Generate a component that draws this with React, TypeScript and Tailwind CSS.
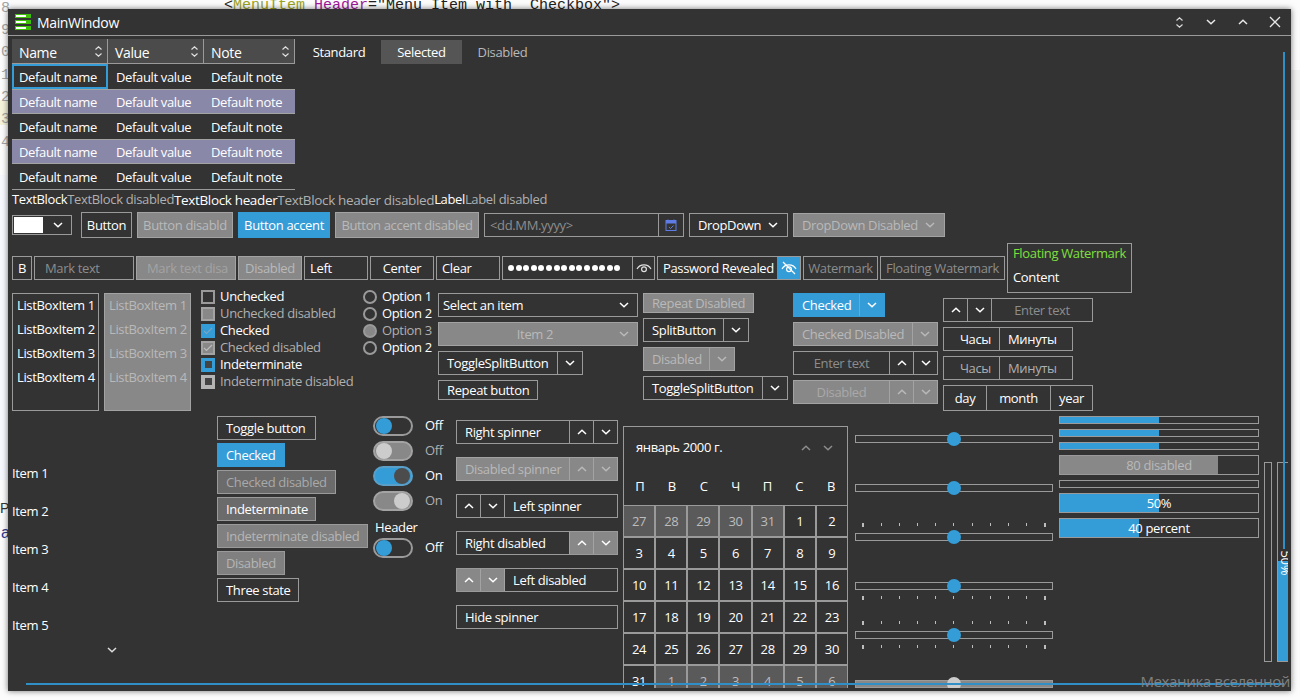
// Control gallery window shown over an IDE. Everything is flow layout; only the
// IDE behind the window and the two stray scrollbar lines are positioned.
import type { ReactNode } from 'react';

const ACCENT = 'bg-[#349dd8]';
const BOX = 'flex shrink-0 items-center border border-[#9a9a9a]';
const DISABLED = 'bg-[#888888] text-[#b9b9b9] border-[#a3a3a3]';

/** Open Sans sits a pixel higher than the original's face; the top padding evens that out in centred rows. */
function T({ children }: { children: ReactNode }) {
  return <span className="whitespace-nowrap pt-[2px]">{children}</span>;
}

function Chevron({ up = false, className = '' }: { up?: boolean; className?: string }) {
  return (
    <svg width="10" height="6" viewBox="0 0 10 6" className={className}>
      <polyline points={up ? '1,5 5,1.2 9,5' : '1,1 5,4.8 9,1'} fill="none" stroke="currentColor" strokeWidth="1.5" />
    </svg>
  );
}

function Sort({ className = '' }: { className?: string }) {
  return (
    <span className={`flex flex-col items-center gap-[3px] ${className}`}>
      <svg width="7" height="4" viewBox="0 0 7 4"><polyline points="0.5,3.5 3.5,0.8 6.5,3.5" fill="none" stroke="currentColor" strokeWidth="1.2" /></svg>
      <svg width="7" height="4" viewBox="0 0 7 4"><polyline points="0.5,0.5 3.5,3.2 6.5,0.5" fill="none" stroke="currentColor" strokeWidth="1.2" /></svg>
    </span>
  );
}

function Logo() {
  return (
    <span className="flex w-4 flex-col gap-[2px]">
      {[0, 1, 2].map((i) => (
        <span key={i} className="flex h-1 items-center bg-[#3fbf0a] pl-[1px]">
          <span className="h-[2px] w-[10px] bg-white" />
        </span>
      ))}
    </span>
  );
}

function TitleBar() {
  return (
    <div className="flex h-[27px] shrink-0 items-center border-b border-[#9a9a9a] pl-[7px] text-[#e8e8e8]">
      <Logo />
      <span className="ml-[6px] text-[14px] text-white">MainWindow</span>
      <span className="ml-auto flex items-center pr-[10px]">
        <Sort className="w-[10px] text-[#dddddd]" />
        <Chevron className="ml-[22px]" />
        <Chevron up className="ml-[22px]" />
        <svg width="12" height="12" viewBox="0 0 12 12" className="ml-[21px]">
          <path d="M1 1 L11 11 M11 1 L1 11" stroke="currentColor" strokeWidth="1.3" />
        </svg>
      </span>
    </div>
  );
}

function HeaderCell({ label, width }: { label: string; width: string }) {
  return (
    <div className={`flex h-[25px] items-center justify-between border-b border-r border-[#9a9a9a] bg-[#4b4b4b] pl-[7px] pr-[5px] text-[14px] ${width}`}>
      <T>{label}</T>
      <Sort className="text-[#e0e0e0]" />
    </div>
  );
}

function DataRow({ tinted, focused }: { tinted: boolean; focused: boolean }) {
  return (
    <div className={`flex h-[25px] items-center ${tinted ? 'border-y border-[#a3a3a3] bg-[#8a88a8]' : ''}`}>
      <div className={`flex h-[25px] w-[96px] items-center ${focused ? 'border-2 border-[#349dd8] pl-[5px]' : 'pl-[7px]'}`}><T>Default name</T></div>
      <div className="flex w-[96px] items-center pl-[8px]"><T>Default value</T></div>
      <div className="flex w-[91px] items-center pl-[7px]"><T>Default note</T></div>
    </div>
  );
}

function DataTable() {
  return (
    <div className="w-[283px] border-b border-[#9a9a9a]">
      <div className="flex">
        <HeaderCell label="Name" width="w-[96px]" />
        <HeaderCell label="Value" width="w-[96px]" />
        <HeaderCell label="Note" width="w-[91px]" />
      </div>
      {[0, 1, 2, 3, 4].map((i) => (
        <DataRow key={i} tinted={i % 2 === 1} focused={i === 0} />
      ))}
    </div>
  );
}

function Tabs() {
  return (
    <div className="ml-[2px] mt-[1px] flex h-[24px] items-center text-center">
      <div className="flex w-[84px] items-center justify-center"><T>Standard</T></div>
      <div className="flex h-[24px] w-[81px] items-center justify-center bg-[#555555]"><T>Selected</T></div>
      <div className="flex w-[81px] items-center justify-center text-[#b9b9b9]"><T>Disabled</T></div>
    </div>
  );
}

function TextRow() {
  return (
    <div className="flex h-[18px] items-center whitespace-nowrap pl-[4px] pt-[2px]">
      <span>TextBlock</span>
      <span className="text-[#b0b0b0]">TextBlock disabled</span>
      <span className="text-[13.5px]">TextBlock header</span>
      <span className="text-[13.5px] text-[#b0b0b0]">TextBlock header disabled</span>
      <span>Label</span>
      <span className="text-[#b0b0b0]">Label disabled</span>
    </div>
  );
}

function CalendarIcon() {
  return (
    <svg width="12" height="12" viewBox="0 0 12 12" className="text-[#5f7ce6]">
      <rect x="1" y="1.5" width="10" height="10" fill="none" stroke="currentColor" />
      <rect x="1" y="1.5" width="10" height="3" fill="currentColor" />
      <path d="M3 0.5 V2 M9 0.5 V2" stroke="currentColor" />
      <path d="M4 8 L5.5 9.5 L8.5 6.5" fill="none" stroke="currentColor" />
    </svg>
  );
}

function Eye({ off = false }: { off?: boolean }) {
  return (
    <svg width="16" height="14" viewBox="0 0 16 14">
      <path d="M1 8 C4 2.5 12 2.5 15 8" fill="none" stroke="currentColor" strokeWidth="1.2" />
      <circle cx="8" cy="8.2" r="2.4" fill="none" stroke="currentColor" strokeWidth="1.2" />
      {off && <path d="M2 1 L14 13" stroke="currentColor" strokeWidth="1.2" />}
    </svg>
  );
}

function ControlsRow() {
  return (
    <div className="mt-[4px] flex h-[26px] items-center gap-[5px] pl-[4px]">
      <div className={`${BOX} mr-[4px] h-[20px] w-[60px] pl-[1px]`}>
        <span className="h-[16px] w-[29px] bg-white" />
        <Chevron className="ml-[10px]" />
      </div>
      <div className={`${BOX} h-[26px] w-[51px] justify-center`}><T>Button</T></div>
      <div className={`${BOX} ${DISABLED} h-[26px] w-[96px] justify-center`}><T>Button disabld</T></div>
      <div className={`${BOX} ${ACCENT} h-[26px] w-[92px] justify-center border-[#349dd8]`}><T>Button accent</T></div>
      <div className={`${BOX} ${DISABLED} h-[26px] w-[144px] justify-center`}><T>Button accent disabled</T></div>
      <div className={`${BOX} h-[24px] w-[200px]`}>
        <span className="flex-1 pl-[5px] pt-[2px] text-[#8d8d8d]">&lt;dd.MM.yyyy&gt;</span>
        <span className="flex h-full w-[25px] items-center justify-center border-l border-[#9a9a9a]"><CalendarIcon /></span>
      </div>
      <div className={`${BOX} h-[24px] w-[99px] justify-between pl-[8px] pr-[9px]`}><T>DropDown</T><Chevron /></div>
      <div className={`${BOX} ${DISABLED} h-[24px] w-[152px] justify-between pl-[8px] pr-[9px]`}><T>DropDown Disabled</T><Chevron /></div>
    </div>
  );
}

function Dots() {
  return (
    <span className="flex gap-[1.6px]">
      {Array.from({ length: 15 }, (_, i) => (
        <span key={i} className="h-[6px] w-[6px] rounded-full bg-white" />
      ))}
    </span>
  );
}

function InputsRow() {
  return (
    <div className="mt-[5px] flex h-[50px] items-center gap-[2px] pl-[4px]">
      <div className={`${BOX} h-[24px] w-[20px] justify-center`}><T>B</T></div>
      <div className={`${BOX} h-[24px] w-[100px] pl-[10px] text-[#8d8d8d]`}><T>Mark text</T></div>
      <div className={`${BOX} h-[24px] w-[100px] overflow-hidden border-[#a3a3a3] bg-[#888888] pl-[10px] text-[#a3a3a3]`}><T>Mark text disa</T></div>
      <div className={`${BOX} ${DISABLED} h-[24px] w-[64px] justify-center`}><T>Disabled</T></div>
      <div className={`${BOX} h-[24px] w-[64px] pl-[5px]`}><T>Left</T></div>
      <div className={`${BOX} h-[24px] w-[64px] justify-center`}><T>Center</T></div>
      <div className={`${BOX} h-[24px] w-[64px] pl-[5px]`}><T>Clear</T></div>
      <div className={`${BOX} h-[24px] w-[153px]`}>
        <span className="w-[129px] pl-[5px]"><Dots /></span>
        <span className="flex h-full flex-1 items-center justify-center border-l border-[#9a9a9a] text-[#e0e0e0]"><Eye /></span>
      </div>
      <div className={`${BOX} h-[24px] w-[144px]`}>
        <span className="w-[119px] whitespace-nowrap pl-[5px] pt-[2px]">Password Revealed</span>
        <span className={`flex h-full flex-1 items-center justify-center ${ACCENT}`}><Eye off /></span>
      </div>
      <div className={`${BOX} h-[24px] w-[75px] justify-center text-[#8d8d8d]`}><T>Watermark</T></div>
      <div className={`${BOX} h-[24px] w-[125px] justify-center text-[#8d8d8d]`}><T>Floating Watermark</T></div>
      <div className={`${BOX} h-[50px] w-[125px] flex-col !items-start gap-[4px] whitespace-nowrap pl-[5px]`}>
        <span className="text-[#7ee03c]">Floating Watermark</span>
        <span>Content</span>
      </div>
    </div>
  );
}

function ListBox({ disabled = false }: { disabled?: boolean }) {
  return (
    <div className={`${BOX} h-[118px] w-[87px] flex-col !items-start pl-[4px] ${disabled ? DISABLED : ''}`}>
      {[1, 2, 3, 4].map((n) => (
        <div key={n} className="flex h-[24px] items-center whitespace-nowrap">ListBoxItem {n}</div>
      ))}
    </div>
  );
}

function CheckRow({ label, tone, mark, disabled = false }: { label: string; tone: string; mark?: 'check' | 'dot'; disabled?: boolean }) {
  return (
    <div className={`flex h-[17px] items-center gap-[5px] whitespace-nowrap ${disabled ? 'text-[#b0b0b0]' : ''}`}>
      <span className={`flex h-[14px] w-[14px] items-center justify-center ${tone}`}>
        {mark === 'check' && (
          <svg width="10" height="8" viewBox="0 0 10 8"><path d="M1 4 L3.5 6.5 L9 1" fill="none" stroke={disabled ? '#bdbdbd' : '#7ea4bd'} strokeWidth="1.1" /></svg>
        )}
        {mark === 'dot' && <span className="h-[7px] w-[7px] bg-[#444444]" />}
      </span>
      {label}
    </div>
  );
}

function CheckColumn() {
  return (
    <div className="-mt-[5px] ml-[10px] w-[162px]">
      <CheckRow label="Unchecked" tone="border-2 border-[#9a9a9a]" />
      <CheckRow label="Unchecked disabled" tone="border-2 border-[#a3a3a3] bg-[#888888]" disabled />
      <CheckRow label="Checked" tone={ACCENT} mark="check" />
      <CheckRow label="Checked disabled" tone="border-2 border-[#a3a3a3] bg-[#888888]" mark="check" disabled />
      <CheckRow label="Indeterminate" tone={ACCENT} mark="dot" />
      <CheckRow label="Indeterminate disabled" tone="bg-[#b4b4b4]" mark="dot" disabled />
    </div>
  );
}

function RadioColumn() {
  const options = [
    { label: 'Option 1', disabled: false },
    { label: 'Option 2', disabled: false },
    { label: 'Option 3', disabled: true },
    { label: 'Option 2', disabled: false },
  ];
  return (
    <div className="-mt-[5px] w-[75px]">
      {options.map((o, i) => (
        <div key={i} className={`flex h-[17px] items-center gap-[5px] whitespace-nowrap ${o.disabled ? 'text-[#b0b0b0]' : ''}`}>
          <span className={`h-[14px] w-[14px] rounded-full border-2 border-[#9a9a9a] ${o.disabled ? 'bg-[#888888]' : ''}`} />
          {o.label}
        </div>
      ))}
    </div>
  );
}

function Split({ label, w, disabled = false, accent = false }: { label: string; w: string; disabled?: boolean; accent?: boolean }) {
  return (
    <div className={`${BOX} h-[24px] ${w} ${disabled ? DISABLED : ''} ${accent ? `${ACCENT} border-[#349dd8]` : ''}`}>
      <span className="flex-1 whitespace-nowrap pl-[8px] pt-[2px]">{label}</span>
      <span className={`flex h-full w-[25px] items-center justify-center border-l ${accent ? 'border-[#5aaede]' : disabled ? 'border-[#a3a3a3]' : 'border-[#9a9a9a]'}`}>
        <Chevron />
      </span>
    </div>
  );
}

function SpinCell({ up, tone = 'border-[#9a9a9a]', right = false }: { up: boolean; tone?: string; right?: boolean }) {
  return (
    <span className={`flex h-full w-[24px] shrink-0 items-center justify-center ${right ? 'border-r' : 'border-l'} ${tone}`}>
      <Chevron up={up} />
    </span>
  );
}

function UpDownRight({ label, disabled = false }: { label: string; disabled?: boolean }) {
  return (
    <div className={`${BOX} h-[24px] w-[145px] ${disabled ? DISABLED : ''}`}>
      <span className={`flex-1 pt-[2px] text-center ${disabled ? 'text-[#a9a9a9]' : 'text-[#8d8d8d]'}`}>{label}</span>
      <SpinCell up tone={disabled ? 'border-[#a3a3a3]' : undefined} />
      <SpinCell up={false} tone={disabled ? 'border-[#a3a3a3]' : undefined} />
    </div>
  );
}

function PickerRow({ dim = false }: { dim?: boolean }) {
  return (
    <div className={`${BOX} h-[24px] w-[130px] ${dim ? 'text-[#b0b0b0]' : ''}`}>
      <span className="w-[55px] pr-[8px] pt-[2px] text-right">Часы</span>
      <span className="flex h-full flex-1 items-center border-l border-[#9a9a9a] pl-[8px]"><T>Минуты</T></span>
    </div>
  );
}

function TopRow() {
  return (
    <div className="flex h-[118px] items-start pl-[4px]">
      <ListBox />
      <div className="ml-[5px]"><ListBox disabled /></div>
      <CheckColumn />
      <RadioColumn />
      <div className="flex w-[205px] flex-col">
        <div className={`${BOX} h-[24px] w-[200px] justify-between pl-[4px] pr-[8px]`}><T>Select an item</T><Chevron /></div>
        <div className={`${BOX} ${DISABLED} mt-[5px] h-[24px] w-[200px] justify-between pr-[8px]`}>
          <span className="flex-1 pl-[12px] pt-[2px] text-center">Item 2</span><Chevron />
        </div>
        <div className="mt-[5px]"><Split label="ToggleSplitButton" w="w-[145px]" /></div>
        <div className={`${BOX} mt-[5px] h-[20px] w-[100px] pl-[8px]`}><T>Repeat button</T></div>
      </div>
      <div className="flex w-[150px] flex-col">
        <div className={`${BOX} ${DISABLED} h-[20px] w-[111px] justify-center`}><T>Repeat Disabled</T></div>
        <div className="mt-[5px]"><Split label="SplitButton" w="w-[106px]" /></div>
        <div className="mt-[5px]"><Split label="Disabled" w="w-[92px]" disabled /></div>
        <div className="mt-[5px]"><Split label="ToggleSplitButton" w="w-[145px]" /></div>
      </div>
      <div className="flex w-[150px] flex-col">
        <Split label="Checked" w="w-[92px]" accent />
        <div className="mt-[5px]"><Split label="Checked Disabled" w="w-[145px]" disabled /></div>
        <div className="mt-[5px]"><UpDownRight label="Enter text" /></div>
        <div className="mt-[5px]"><UpDownRight label="Disabled" disabled /></div>
      </div>
      <div className="mt-[5px] flex flex-col gap-[5px]">
        <div className={`${BOX} h-[24px] w-[150px]`}>
          <SpinCell up right />
          <SpinCell up={false} right />
          <span className="flex-1 pt-[2px] text-center text-[#8d8d8d]">Enter text</span>
        </div>
        <PickerRow />
        <PickerRow dim />
        <div className={`${BOX} h-[26px] w-[150px]`}>
          <span className="w-[42px] pt-[2px] text-center">day</span>
          <span className="flex h-full w-[65px] items-center justify-center border-x border-[#9a9a9a]"><T>month</T></span>
          <span className="flex-1 pt-[2px] text-center">year</span>
        </div>
      </div>
    </div>
  );
}

function ItemsColumn() {
  return (
    <div className="w-[205px] shrink-0 pt-[38px]">
      {[1, 2, 3, 4, 5].map((n) => (
        <div key={n} className="flex h-[38px] items-center"><T>Item {n}</T></div>
      ))}
      <div className="mt-[3px] flex w-[199px] justify-center text-[#dddddd]"><Chevron /></div>
    </div>
  );
}

function ToggleColumn() {
  const items = [
    { label: 'Toggle button', w: 'w-[99px]', tone: '' },
    { label: 'Checked', w: 'w-[68px]', tone: `${ACCENT} border-[#349dd8]` },
    { label: 'Checked disabled', w: 'w-[119px]', tone: 'bg-[#6b6b6b] text-[#a9a9a9]' },
    { label: 'Indeterminate', w: 'w-[99px]', tone: 'bg-[#6b6b6b]' },
    { label: 'Indeterminate disabled', w: 'w-[151px]', tone: 'bg-[#808080] text-[#b5b5b5]' },
    { label: 'Disabled', w: 'w-[68px]', tone: 'bg-[#808080] text-[#b5b5b5]' },
    { label: 'Three state', w: 'w-[82px]', tone: '' },
  ];
  return (
    <div className="flex w-[156px] shrink-0 flex-col gap-[3px]">
      {items.map((t) => (
        <div key={t.label} className={`${BOX} h-[24px] pl-[8px] ${t.w} ${t.tone}`}><T>{t.label}</T></div>
      ))}
    </div>
  );
}

function Toggle({ on = false, disabled = false, label }: { on?: boolean; disabled?: boolean; label: string }) {
  const track = disabled ? 'border-2 border-[#a3a3a3] bg-[#888888]' : on ? 'bg-[#349dd8] border-2 border-[#5a9fc8]' : 'border-2 border-[#9a9a9a]';
  const knob = disabled ? 'bg-[#cccccc]' : on ? 'bg-[#4c4c4c]' : 'bg-[#349dd8]';
  return (
    <div className="flex h-[20px] items-center">
      <span className={`flex h-[20px] w-[40px] items-center rounded-full px-[1px] ${track} ${on ? 'justify-end' : ''}`}>
        <span className={`h-[16px] w-[16px] rounded-full ${knob}`} />
      </span>
      <span className={`ml-[12px] ${disabled ? 'text-[#b0b0b0]' : ''}`}>{label}</span>
    </div>
  );
}

function SwitchColumn() {
  return (
    <div className="w-[83px] shrink-0">
      <div className="flex flex-col gap-[5px]">
        <Toggle label="Off" />
        <Toggle label="Off" disabled />
        <Toggle on label="On" />
        <Toggle on disabled label="On" />
      </div>
      <div className="ml-[2px] mt-[7px] flex h-[20px] items-center">Header</div>
      <Toggle label="Off" />
    </div>
  );
}

function Spinner({ label, kind, disabled = false, buttonsOff = false }: { label: string; kind: 'right' | 'left' | 'none'; disabled?: boolean; buttonsOff?: boolean }) {
  const cells = buttonsOff ? 'bg-[#888888]' : '';
  const tone = buttonsOff || disabled ? 'border-[#a3a3a3]' : undefined;
  return (
    <div className={`${BOX} h-[24px] w-[162px] ${disabled ? DISABLED : ''}`}>
      {kind === 'left' && (
        <span className={`flex h-full ${cells}`}>
          <SpinCell up right tone={tone} />
          <SpinCell up={false} right tone={tone} />
        </span>
      )}
      <span className="flex-1 whitespace-nowrap pl-[8px] pt-[2px]">{label}</span>
      {kind === 'right' && (
        <span className={`flex h-full ${cells}`}>
          <SpinCell up tone={tone} />
          <SpinCell up={false} tone={tone} />
        </span>
      )}
    </div>
  );
}

function SpinnerColumn() {
  return (
    <div className="mt-[4px] flex w-[167px] shrink-0 flex-col gap-[13px]">
      <Spinner label="Right spinner" kind="right" />
      <Spinner label="Disabled spinner" kind="right" disabled />
      <Spinner label="Left spinner" kind="left" />
      <Spinner label="Right disabled" kind="right" buttonsOff />
      <Spinner label="Left disabled" kind="left" buttonsOff />
      <Spinner label="Hide spinner" kind="none" />
    </div>
  );
}

const CALENDAR_DAYS = [
  27, 28, 29, 30, 31, 1, 2, 3, 4, 5, 6, 7, 8, 9, 10, 11, 12, 13, 14, 15, 16, 17, 18, 19, 20, 21, 22, 23, 24, 25, 26, 27, 28, 29, 30, 31, 1, 2, 3, 4, 5, 6,
];

function Calendar() {
  return (
    <div className="mt-[10px] w-[232px] shrink-0">
      <div className="w-[225px] border-x border-t border-[#9a9a9a]">
        <div className="flex h-[40px] items-center pl-[12px] pr-[14px] pt-[2px]">
          <span className="flex-1">январь 2000 г.</span>
          <Chevron up className="text-[#8d8d8d]" />
          <Chevron className="ml-[12px] text-[#8d8d8d]" />
        </div>
        <div className="grid h-[39px] grid-cols-7 items-center border-b border-[#9a9a9a] pt-[1px] text-center">
          {['П', 'В', 'С', 'Ч', 'П', 'С', 'В'].map((d, i) => (
            <span key={i}>{d}</span>
          ))}
        </div>
        <div className="grid grid-cols-7 gap-[2px] bg-[#9a9a9a]">
          {CALENDAR_DAYS.map((d, i) => (
            <div key={i} className={`flex h-[30px] items-center justify-center ${i < 5 || i > 35 ? 'bg-[#5a5a5a] text-[#bdbdbd]' : 'bg-[#333333]'}`}><T>{d}</T></div>
          ))}
        </div>
      </div>
    </div>
  );
}

function Ticks({ side }: { side: 'top' | 'bottom' }) {
  return (
    <div className={`absolute left-[6px] right-[6px] flex items-center justify-between ${side === 'top' ? '-top-[11px]' : '-bottom-[11px]'}`}>
      {Array.from({ length: 11 }, (_, i) => (
        <span key={i} className={`bg-[#bdbdbd] ${i === 0 || i === 10 ? 'h-[4px] w-[2px]' : 'h-[3px] w-[1px]'}`} />
      ))}
    </div>
  );
}

function Slider({ top = false, bottom = false, disabled = false }: { top?: boolean; bottom?: boolean; disabled?: boolean }) {
  return (
    <div className="flex h-[49px] items-center">
      <div className={`relative flex h-[8px] w-[198px] items-center justify-center border border-[#9a9a9a] ${disabled ? 'bg-[#888888]' : ''}`}>
        {top && <Ticks side="top" />}
        {bottom && <Ticks side="bottom" />}
        <span className={`h-[14px] w-[14px] shrink-0 rounded-full ${disabled ? 'bg-[#cccccc]' : ACCENT}`} />
      </div>
    </div>
  );
}

function SliderColumn() {
  return (
    <div className="-mt-[2px] w-[204px] shrink-0">
      <Slider />
      <Slider />
      <Slider top />
      <Slider bottom />
      <Slider top bottom />
      <Slider disabled />
    </div>
  );
}

function Progress({ value, label, tall = false, fill = ACCENT, disabled = false }: { value: number; label?: string; tall?: boolean; fill?: string; disabled?: boolean }) {
  return (
    <div className={`relative w-[200px] border border-[#9a9a9a] ${tall ? 'h-[20px]' : 'h-[8px]'}`}>
      <div className={`h-full ${fill}`} style={{ width: `${value}%` }} />
      {label && (
        <span className={`absolute inset-0 flex items-center justify-center ${disabled ? 'text-[#b9b9b9]' : ''}`}><T>{label}</T></span>
      )}
    </div>
  );
}

function ProgressColumn() {
  return (
    <div className="flex w-[205px] shrink-0 flex-col gap-[5px]">
      <Progress value={50} />
      <Progress value={50} />
      <Progress value={50} />
      <Progress value={80} label="80 disabled" tall fill="bg-[#888888]" disabled />
      <Progress value={0} />
      <Progress value={50} label="50%" tall />
      <Progress value={40} label="40 percent" tall />
    </div>
  );
}

function VerticalBars() {
  return (
    <div className="mt-[46px] flex gap-[5px]">
      <div className="h-[200px] w-[8px] border border-[#9a9a9a]" />
      <div className="relative flex h-[200px] w-[11px] flex-col justify-end overflow-hidden border-y border-l border-[#9a9a9a]">
        <div className={`h-[100px] ${ACCENT}`} />
        <span className="absolute left-[1px] top-[88px] flex h-[24px] w-[13px] items-center justify-center">
          <span className="rotate-90 whitespace-nowrap">50%</span>
        </span>
      </div>
    </div>
  );
}

function BottomRow() {
  return (
    <div className="mt-[5px] flex items-start pl-[4px]">
      <ItemsColumn />
      <ToggleColumn />
      <SwitchColumn />
      <SpinnerColumn />
      <Calendar />
      <SliderColumn />
      <ProgressColumn />
      <VerticalBars />
    </div>
  );
}

function Desktop({ children }: { children: ReactNode }) {
  const numbers = [['8', 'top-[-2px]'], ['9', 'top-[20px]'], ['0', 'top-[42px]'], ['1', 'top-[65px]'], ['2', 'top-[87px]'], ['3', 'top-[109px]'], ['4', 'top-[132px]']];
  return (
    <div className="relative h-[700px] w-[1300px] overflow-hidden bg-[#fcfcfc] font-['Open_Sans',sans-serif] text-[13px] tracking-[-0.35px] text-white">
      {/* the IDE behind the window */}
      <div className="absolute left-0 top-[100px] h-[25px] w-[8px] bg-[#f6f4da]" />
      <div className="absolute left-0 top-[175px] h-[305px] w-[8px] bg-[#f7f9fe]" />
      <div className="absolute right-0 top-[70px] h-[50px] w-[9px] bg-[#f2f2f2]" />
      {numbers.map(([n, top]) => (
        <span key={n} className={`absolute left-[1px] font-['Liberation_Mono',monospace] text-[15px] text-[#a5a5a5] ${top}`}>{n}</span>
      ))}
      <span className="absolute left-[0px] top-[498px] font-['Liberation_Sans',sans-serif] text-[14px] text-[#333333]">P</span>
      <span className="absolute left-[1px] top-[521px] font-['Liberation_Sans',sans-serif] text-[16px] text-[#2b3a8f]">a</span>
      <div className="absolute left-[224px] top-[-5px] whitespace-pre font-['Liberation_Mono',monospace] text-[15px] tracking-normal text-[#222222]">
        &lt;<span className="text-[#9aa31f]">MenuItem</span> <span className="text-[#a0189a]">Header</span>="Menu Item with  Checkbox"&gt;
      </div>
      {children}
    </div>
  );
}

export default function App() {
  return (
    <Desktop>
      <div className="absolute left-[8px] top-[9px] flex h-[682px] w-[1283px] flex-col bg-[#333333] shadow-[0_0_6px_rgba(0,0,0,0.55)]">
        <TitleBar />
        <div className="h-[652px] w-[1280px] overflow-hidden pt-[3px]">
          <div className="flex items-start pl-[4px]">
            <DataTable />
            <Tabs />
          </div>
          <TextRow />
          <ControlsRow />
          <InputsRow />
          <TopRow />
          <BottomRow />
        </div>
        {/* stray scrollbars sit over the content */}
        <div className="absolute left-[1275px] top-[43px] h-[497px] w-[2px] bg-[#2f8fc6]" />
        <div className="absolute left-[18px] top-[674px] h-[2px] w-[1258px] bg-[#2f8fc6]" />
        <span className="absolute right-[1px] top-[661px] whitespace-nowrap text-[15px] text-[#808080]">Механика вселенной</span>
      </div>
    </Desktop>
  );
}
